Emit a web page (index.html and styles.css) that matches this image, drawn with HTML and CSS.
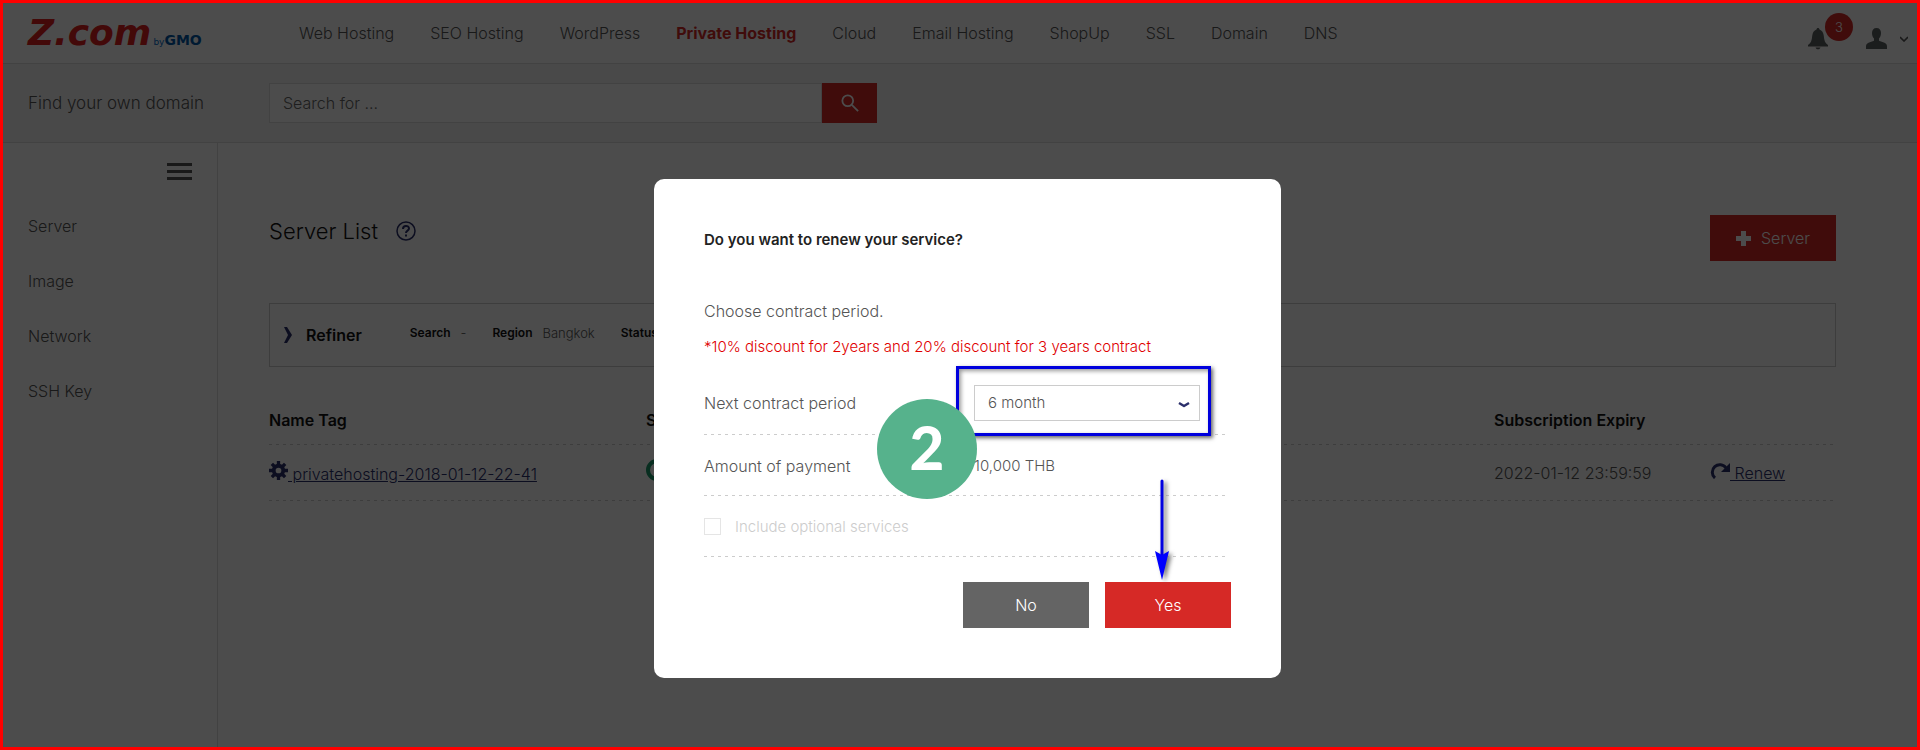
FILE: index.html
```
<!DOCTYPE html>
<html lang="en">
<head>
    <meta charset="UTF-8">
    <meta name="viewport" content="width=device-width, initial-scale=1.0">
    <title>Server List</title>
    <link rel="stylesheet" href="styles.css">
</head>
<body>

    <!-- Top bar -->
    <header class="header">
        <a class="logo" href="#">
            <span class="logo-main">Z.com</span><span class="logo-by">by</span><span class="logo-gmo">GMO</span>
        </a>
        <nav class="nav">
            <a href="#">Web Hosting</a>
            <a href="#">SEO Hosting</a>
            <a href="#">WordPress</a>
            <a class="active" href="#">Private Hosting</a>
            <a href="#">Cloud</a>
            <a href="#">Email Hosting</a>
            <a href="#">ShopUp</a>
            <a href="#">SSL</a>
            <a href="#">Domain</a>
            <a href="#">DNS</a>
        </nav>
        <div class="account">
            <button class="icon-btn bell" type="button" aria-label="Notifications">
                <svg width="20" height="22" viewBox="0 0 20 22"><path d="M10 0c.9 0 1.400.700 1.500 1.500C14 2.400 15.500 4.500 15.800 8c.3 4.500 1.500 7.500 4.200 9v1.500H0V17c2.700-1.500 3.900-4.500 4.200-9 .3-3.500 1.800-5.600 4.300-6.500C8.600.7 9.100 0 10 0zM7.500 19.500h5c-.5 1.300-1.500 1.800-2.500 1.800s-2-.5-2.500-1.800z"/></svg>
                <span class="badge">3</span>
            </button>
            <button class="icon-btn user" type="button" aria-label="Account">
                <svg width="21" height="21" viewBox="0 0 21 21"><path d="M10.500 0c3 0 4.500 2 4.500 5 0 2.500-.8 4.500-2 5.600v2.200l5.500 2c1.800.7 2.500 2 2.500 3.700V21H0v-2.500c0-1.700.7-3 2.500-3.700l5.500-2v-2.200C6.800 9.500 6 7.500 6 5c0-3 1.500-5 4.500-5z"/></svg>
                <svg width="8" height="6" viewBox="0 0 8 6"><path d="M0 1l4 4 4-4" fill="none" stroke="#555" stroke-width="1.600"/></svg>
            </button>
        </div>
    </header>

    <!-- Domain search -->
    <form class="search">
        <label for="domain">Find your own domain</label>
        <input type="text" id="domain" placeholder="Search for ...">
        <button type="submit" aria-label="Search">
            <svg width="18" height="18" viewBox="0 0 20 20" fill="none" stroke="#fff" stroke-width="2"><circle cx="7.500" cy="7.500" r="6"/><path d="M12 12l7 7"/></svg>
        </button>
    </form>

    <div class="content">
        <aside class="sidebar">
            <button class="menu-btn" type="button" aria-label="Menu"><span></span><span></span><span></span></button>
            <a href="#">Server</a>
            <a href="#">Image</a>
            <a href="#">Network</a>
            <a href="#">SSH Key</a>
        </aside>

        <main class="main">
            <div class="title-row">
                <h1>Server List</h1>
                <svg class="help" width="20" height="20" viewBox="0 0 20 20" fill="none" stroke="#2b2f6b"><circle cx="10" cy="10" r="9" stroke-width="1.500"/><path d="M7 8c0-4 6-4 6-.5C13 9.700 10 9.500 10 12M10 13.500v2" stroke-width="2"/></svg>
                <button class="btn btn-red" type="button"><svg width="15" height="15" viewBox="0 0 15 15"><path d="M5 0h5v5h5v5h-5v5H5v-5H0V5h5z" fill="#fff"/></svg>Server</button>
            </div>

            <div class="refiner">
                <svg width="8" height="16" viewBox="0 0 8 16"><path d="M0 0h3l5 8-5 8H0l4-8z" fill="#2b2f6b"/></svg>
                <strong>Refiner</strong>
                <dl>
                    <dt>Search</dt><dd>-</dd>
                    <dt>Region</dt><dd>Bangkok</dd>
                    <dt>Status</dt><dd>-</dd>
                </dl>
            </div>

            <table class="servers">
                <thead>
                    <tr>
                        <th class="col-name">Name Tag</th>
                        <th class="col-status">Status</th>
                        <th class="col-expiry">Subscription Expiry</th>
                        <th class="col-action"></th>
                    </tr>
                </thead>
                <tbody>
                    <tr>
                        <td><a href="#"><svg width="19" height="19" viewBox="-10 -10 20 20" fill="none" stroke="#2b2f6b"><circle r="5" stroke-width="4"/><path d="M0-10v4M0 6v4M-10 0h4M6 0h4M-7-7l3 3M4 4l3 3M-7 7l3-3M4-4l3-3" stroke-width="3.500"/></svg> privatehosting-2018-01-12-22-41</a></td>
                        <td><svg width="22" height="22" viewBox="0 0 22 22"><circle cx="11" cy="11" r="9" fill="none" stroke="#1d9a6c" stroke-width="4"/></svg></td>
                        <td>2022-01-12 23:59:59</td>
                        <td><a href="#"><svg width="20" height="18" viewBox="0 0 20 18"><path d="M5 17A7.500 7.500 0 1 1 16 7" fill="none" stroke="#2b2f6b" stroke-width="3"/><path d="M20 2v9h-9z" fill="#2b2f6b"/></svg> Renew</a></td>
                    </tr>
                </tbody>
            </table>
        </main>
    </div>

    <!-- Renew dialog -->
    <div class="overlay">
        <div class="modal" role="dialog" aria-modal="true" aria-labelledby="modalTitle">
            <h2 id="modalTitle">Do you want to renew your service?</h2>
            <p>Choose contract period.</p>
            <p class="note">*10% discount for 2years and 20% discount for 3 years contract</p>
            <form>
                <div class="row row-period">
                    <label class="label" for="period">Next contract period</label>
                    <div class="select-wrap">
                        <select id="period">
                            <option>6 month</option>
                            <option>1 year</option>
                            <option>2 years</option>
                            <option>3 years</option>
                        </select>
                        <svg class="select-caret" width="12" height="8" viewBox="0 0 12 8"><path d="M1 2l5 3 5-3" fill="none" stroke="#2b2f6b" stroke-width="2.500" stroke-linejoin="round"/></svg>
                        <div class="highlight"></div>
                        <div class="step">2</div>
                    </div>
                </div>
                <div class="row">
                    <span class="label">Amount of payment</span>
                    <span>10,000 THB</span>
                </div>
                <div class="row disabled">
                    <input type="checkbox" id="optional" disabled>
                    <label for="optional">Include optional services</label>
                </div>
                <div class="buttons">
                    <button class="btn btn-gray" type="button">No</button>
                    <button class="btn btn-red" type="submit">Yes
                        <svg class="arrow" width="24" height="104" viewBox="0 0 24 104"><path d="M12 4v80" stroke="#0000e0" stroke-width="3" stroke-linecap="round"/><path d="M5 74l7 4 7-4-7 29z" fill="#00f"/></svg>
                    </button>
                </div>
            </form>
        </div>
    </div>

</body>
</html>
```
FILE: styles.css
```
* {
    box-sizing: border-box;
}
body {
    margin: 0;
    min-height: 100vh;
    display: flex;
    flex-direction: column;
    font-family: Inter, "Liberation Sans", sans-serif;
    font-size: 16px;
    font-weight: 300;
    line-height: 24px;
    color: #555;
    background-color: #fff;
}
a {
    color: #555;
    text-decoration: none;
}
button, input, select {
    font: inherit;
    color: inherit;
}
button {
    border: none;
    padding: 0;
    cursor: pointer;
}
svg {
    display: block;
}

/* Top bar */
.header {
    display: flex;
    align-items: center;
    height: 64px;
    padding: 3px 12px 0 28px;
    border-bottom: 1px solid #ddd;
}
.logo {
    display: flex;
    align-items: baseline;
    width: 271px;
    padding-top: 8px;
    font-family: "DejaVu Sans", sans-serif;
}
.logo-main {
    font-size: 36px;
    font-weight: 700;
    font-style: italic;
    color: #e02020;
}
.logo-by {
    margin-left: 2px;
    font-size: 9px;
    font-weight: 400;
    color: #0068c8;
}
.logo-gmo {
    font-size: 14px;
    font-weight: 700;
    color: #0058a8;
}
.nav {
    display: flex;
    gap: 36px;
}
.nav .active {
    font-weight: 700;
    color: #d62926;
}
.account {
    display: flex;
    gap: 38px;
    margin: 11px 0 0 auto;
}
.icon-btn {
    position: relative;
    display: flex;
    align-items: center;
    gap: 13px;
    background: none;
    fill: #5c6262;
}
.badge {
    position: absolute;
    left: 17px;
    top: -15px;
    width: 28px;
    border-radius: 50%;
    background-color: #d62926;
    color: #fff;
    font-size: 13px;
    line-height: 28px;
}

/* Domain search */
.search {
    display: flex;
    align-items: center;
    height: 79px;
    padding: 0 28px;
    background-color: #f6f6f6;
    border-bottom: 1px solid #ddd;
}
.search label {
    width: 241px;
    font-size: 17px;
}
.search input {
    width: 553px;
    height: 40px;
    padding: 0 13px;
    border: 1px solid #ddd;
    background-color: #fff;
}
.search input::placeholder {
    color: #666;
}
.search button {
    display: flex;
    align-items: center;
    justify-content: center;
    width: 55px;
    height: 40px;
    background-color: #d62926;
}

/* Page content */
.content {
    display: flex;
    flex: 1;
}
.sidebar {
    display: flex;
    flex-direction: column;
    width: 218px;
    padding: 20px 25px 0 28px;
    border-right: 1px solid #ddd;
}
.sidebar a {
    line-height: 55px;
}
.menu-btn {
    display: flex;
    flex-direction: column;
    gap: 4px;
    align-self: flex-end;
    width: 25px;
    margin-bottom: 19px;
    background: none;
}
.menu-btn span {
    width: 100%;
    height: 3px;
    background-color: #555;
}
.main {
    flex: 1;
    padding: 72px 84px 0 51px;
}
.title-row {
    display: flex;
    align-items: center;
}
h1 {
    margin: 0 18px 14px 0;
    font-size: 22px;
    font-weight: 300;
    color: #111;
}
.help {
    margin-bottom: 14px;
}
.btn {
    position: relative;
    display: flex;
    align-items: center;
    justify-content: center;
    gap: 10px;
    width: 126px;
    height: 46px;
    color: #fff;
}
.btn-red {
    background-color: #d62926;
}
.btn-gray {
    background-color: #646464;
}
.title-row .btn {
    margin-left: auto;
}
.refiner {
    display: flex;
    align-items: center;
    height: 64px;
    margin: 42px 0 27px;
    padding-left: 14px;
    border: 1px solid #ccc;
}
.refiner strong {
    margin: 0 48px 0 14px;
    font-weight: 600;
    color: #111;
}
.refiner dl {
    display: flex;
    margin: 0 0 4px;
    font-size: 13px;
}
.refiner dt {
    margin-right: 10px;
    font-size: 12px;
    font-weight: 600;
    color: #111;
}
.refiner dd {
    margin: 0 26px 0 0;
}

/* Server table */
.servers {
    width: 100%;
    table-layout: fixed;
    border-collapse: collapse;
    text-align: left;
}
.servers th, .servers td {
    height: 56px;
    padding: 0;
}
.servers th {
    height: 51px;
    font-weight: 600;
    color: #111;
}
.servers tr, .row {
    background: repeating-linear-gradient(to right, #ccc 0 3px, transparent 3px 7px) left bottom / 100% 1px no-repeat;
}
.servers svg {
    display: inline-block;
}
.servers a {
    color: #2b2f6b;
    text-decoration: underline;
}
.col-name {
    width: 377px;
}
.col-expiry {
    width: 216px;
}
.col-action {
    width: 126px;
}

/* Dialog, with the page framed in red */
.overlay {
    position: fixed;
    inset: 0;
    display: flex;
    align-items: center;
    justify-content: center;
    padding: 107px 0 0 15px;
    background-color: rgba(0, 0, 0, 0.7);
    border: 3px solid #f00;
}
.modal {
    width: 627px;
    padding: 49px 50px 50px;
    border-radius: 10px;
    background-color: #fff;
    color: #555;
    font-size: 15px;
}
.modal h2 {
    margin: 0 0 47px;
    font-size: 15px;
    font-weight: 600;
    color: #222;
}
.modal p {
    margin: 0 0 12px;
    font-size: 16px;
}
.modal .note {
    margin: 0;
    font-size: 15px;
    color: #e00000;
}
.row {
    display: flex;
    align-items: center;
    height: 61px;
    margin-right: 4px;
}
.row-period {
    height: 76px;
    padding-top: 12px;
}
.label {
    width: 270px;
    font-size: 16px;
}
.select-wrap {
    position: relative;
}
select {
    appearance: none;
    width: 226px;
    height: 36px;
    padding: 0 13px;
    border: 1px solid #ccc;
    background-color: #fff;
}
.select-caret {
    position: absolute;
    right: 10px;
    top: 16px;
}
.disabled {
    color: #ccc;
}
.disabled input {
    appearance: none;
    width: 17px;
    height: 17px;
    margin: 0 14px 0 0;
    border: 1px solid #e5e5e5;
}
.buttons {
    display: flex;
    justify-content: flex-end;
    gap: 16px;
    margin-top: 25px;
    font-size: 16px;
}

/* Step marks */
.highlight {
    position: absolute;
    inset: -19px -11px -15px -18px;
    border: 3px solid #00d;
    box-shadow: 2px 2px 4px #666, inset 2px 2px 4px #999;
    pointer-events: none;
}
.step {
    position: absolute;
    left: -97px;
    top: 14px;
    width: 100px;
    height: 100px;
    border-radius: 50%;
    background-color: #56b28c;
    color: #fff;
    font-family: Lato, sans-serif;
    font-size: 60px;
    font-weight: 900;
    line-height: 96px;
    text-align: center;
}
.arrow {
    position: absolute;
    right: 57px;
    bottom: 47px;
    filter: drop-shadow(3px 2px 2px #777);
    pointer-events: none;
}
```
